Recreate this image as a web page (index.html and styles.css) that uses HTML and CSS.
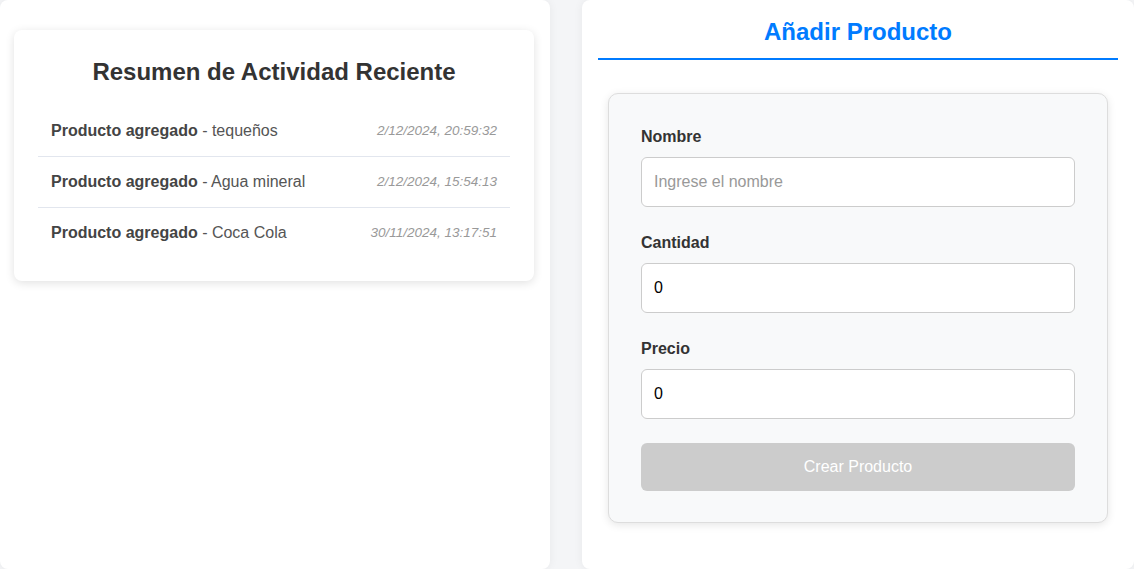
FILE: index.html
```html
<!DOCTYPE html>
<html lang="es">
<head>
<meta charset="utf-8">
<title>Panel</title>
<link rel="stylesheet" href="styles.css">
</head>
<body>
<div class="layout">
  <section class="panel panel-left">
    <div class="activity-card">
      <h2 class="activity-title">Resumen de Actividad Reciente</h2>
      <ul class="activity-list">
        <li class="activity-item">
          <span class="activity-text"><strong>Producto agregado</strong> - tequeños</span>
          <span class="activity-date">2/12/2024, 20:59:32</span>
        </li>
        <li class="activity-item">
          <span class="activity-text"><strong>Producto agregado</strong> - Agua mineral</span>
          <span class="activity-date">2/12/2024, 15:54:13</span>
        </li>
        <li class="activity-item">
          <span class="activity-text"><strong>Producto agregado</strong> - Coca Cola</span>
          <span class="activity-date">30/11/2024, 13:17:51</span>
        </li>
      </ul>
    </div>
  </section>
  <section class="panel panel-right">
    <h2 class="form-title">Añadir Producto</h2>
    <form class="product-form">
      <div class="form-group">
        <label class="form-label" for="nombre">Nombre</label>
        <input class="form-input" id="nombre" type="text" placeholder="Ingrese el nombre">
      </div>
      <div class="form-group">
        <label class="form-label" for="cantidad">Cantidad</label>
        <input class="form-input" id="cantidad" type="number" value="0">
      </div>
      <div class="form-group">
        <label class="form-label" for="precio">Precio</label>
        <input class="form-input" id="precio" type="number" value="0">
      </div>
      <button class="submit-btn" type="button" disabled>Crear Producto</button>
    </form>
  </section>
</div>
</body>
</html>
```
FILE: styles.css
```css
* { box-sizing: border-box; }
html, body { margin: 0; padding: 0; }
body {
  background: #f4f5f7;
  font-family: "Liberation Sans", Arial, sans-serif;
  color: #333;
  height: 569px;
  overflow: hidden;
}
.layout {
  display: grid;
  grid-template-columns: 550px 552px;
  column-gap: 32px;
  height: 569px;
}
.panel {
  background: #fff;
  border-radius: 8px;
  height: 569px;
  box-shadow: 0 0 10px rgba(0,0,0,0.06);
}
.panel-left {
  padding: 30px 16px 0 14px;
}
.activity-card {
  width: 520px;
  background: #fff;
  border-radius: 8px;
  box-shadow: 0 2px 10px rgba(0,0,0,0.12);
  padding: 24px 24px 23px;
}
.activity-title {
  margin: 4px 0 20px;
  text-align: center;
  font-size: 24px;
  font-weight: bold;
  color: #333;
  line-height: 28px;
}
.activity-list {
  list-style: none;
  margin: 0;
  padding: 0;
}
.activity-item {
  display: flex;
  justify-content: space-between;
  align-items: center;
  padding: 16px 13px;
  border-bottom: 1px solid #e2e6ee;
  font-size: 16px;
  line-height: 18px;
  color: #555;
}
.activity-item:last-child { border-bottom: none; }
.activity-text strong { color: #444; }
.activity-date {
  font-size: 13.5px;
  font-style: italic;
  color: #999;
}
.panel-right {
  padding: 16px 16px 0;
}
.form-title {
  margin: 0;
  text-align: center;
  font-size: 24px;
  font-weight: bold;
  color: #007bff;
  line-height: 28px;
  padding: 2px 0 12px;
  border-bottom: 2px solid #007bff;
}
.product-form {
  margin: 33px 10px 0;
  background: #f8f9fa;
  border: 1px solid #ddd;
  border-radius: 10px;
  box-shadow: 0 2px 8px rgba(0,0,0,0.1);
  padding: 33px 32px 31px;
}
.form-group {
  margin-bottom: 26px;
}
.form-group:last-of-type {
  margin-bottom: 24px;
}
.form-label {
  display: block;
  font-size: 16px;
  font-weight: bold;
  color: #333;
  line-height: 19px;
  margin-bottom: 11px;
}
.form-input {
  display: block;
  width: 100%;
  height: 50px;
  border: 1px solid #ccc;
  border-radius: 6px;
  padding: 0 12px;
  font-family: "Liberation Sans", Arial, sans-serif;
  font-size: 16px;
  color: #000;
  background: #fff;
  outline: none;
}
.form-input::placeholder { color: #999; }
.form-input::-webkit-outer-spin-button,
.form-input::-webkit-inner-spin-button { -webkit-appearance: none; margin: 0; }
.form-input[type=number] { -moz-appearance: textfield; }
.submit-btn {
  display: block;
  width: 100%;
  height: 48px;
  border: none;
  border-radius: 6px;
  background: #ccc;
  color: #fff;
  font-family: "Liberation Sans", Arial, sans-serif;
  font-size: 16px;
}
```
